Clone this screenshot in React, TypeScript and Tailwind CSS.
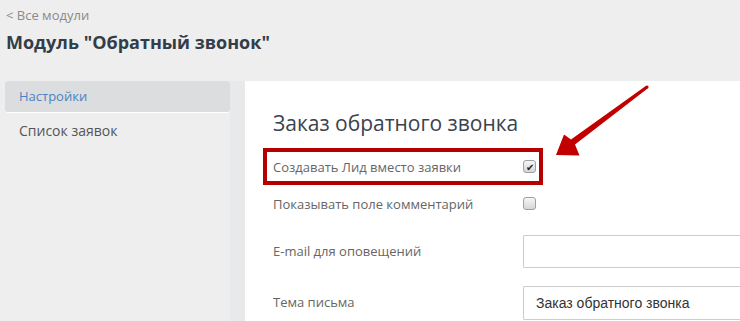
import React from 'react';

function Check({ checked }: { checked?: boolean }) {
  return (
    <span className="flex h-[13px] w-[13px] items-center justify-center rounded-[3px] border border-[#a0a0a0] bg-gradient-to-b from-[#f6f6f6] to-[#d6d6d6] text-[10px] leading-none text-[#222]">
      {checked ? '✔' : ''}
    </span>
  );
}

export default function App() {
  const font = { fontFamily: '"Open Sans", "Noto Sans", sans-serif' };
  return (
    <div className="relative h-[321px] w-[740px] overflow-hidden bg-[#eeeeee]" style={font}>
      <div className="px-[6px] pt-[6px]">
        <div className="text-[13px] leading-[18px] text-[#8a8a8a]">&lt; Все модули</div>
        <h1 className="mt-[6px] text-[18px] font-bold leading-[24px] text-[#333d49]">Модуль "Обратный звонок"</h1>
      </div>

      <div className="mt-[27px] flex">
        <div className="ml-[5px] w-[225px]">
          <div className="flex h-[32px] items-center rounded-[3px] border-b border-white bg-[#dcdddf] px-[14px] text-[13px] text-[#4a83c4]">
            Настройки
          </div>
          <div className="flex h-[34px] items-center px-[14px] text-[14px] text-[#555]">Список заявок</div>
        </div>
        <div className="h-[240px] w-[15px] bg-[#e8e9eb]" />
        <div className="h-[240px] flex-1 bg-white pl-[28px] pt-[28px]">
          <h2 className="text-[21px] font-normal leading-[28px] text-[#3a434c]">Заказ обратного звонка</h2>

          <div className="mt-[14px] flex h-[34px] items-center text-[13px] text-[#666]">
            <span className="w-[250px]">Создавать Лид вместо заявки</span>
            <span className="-mt-[3px]"><Check checked /></span>
          </div>
          <div className="mt-[3px] flex h-[34px] items-center text-[13px] text-[#666]">
            <span className="w-[250px]">Показывать поле комментарий</span>
            <span className="-mt-[3px]"><Check /></span>
          </div>
          <div className="mt-[13px] flex h-[33px] items-center text-[13px] text-[#666]">
            <span className="w-[250px]">E-mail для оповещений</span>
            <div className="h-[33px] flex-1 rounded-l-[2px] border border-r-0 border-[#cccccc] bg-white" />
          </div>
          <div className="mt-[18px] flex h-[34px] items-center text-[13px] text-[#666]">
            <span className="w-[250px]">Тема письма</span>
            <div
              className="flex h-[34px] flex-1 items-center rounded-l-[2px] border border-r-0 border-[#cccccc] bg-white pl-[12px] text-[14px] text-[#333]"
              style={{ fontFamily: '"Liberation Sans", Arial, sans-serif' }}
            >
              Заказ обратного звонка
            </div>
          </div>
        </div>
      </div>

      <div className="pointer-events-none absolute left-[263px] top-[148px] h-[37px] w-[280px] border-[4px] border-[#b40000]" />
      <svg className="pointer-events-none absolute left-0 top-0" width="740" height="321">
        <polygon
          points="556,155 564,134.5 571,139.4 646.1,85.8 647.9,88.2 575,144.6 579.5,155.5"
          fill="#c20000"
        />
        <circle cx="647" cy="87" r="1.6" fill="#c20000" />
      </svg>
    </div>
  );
}
